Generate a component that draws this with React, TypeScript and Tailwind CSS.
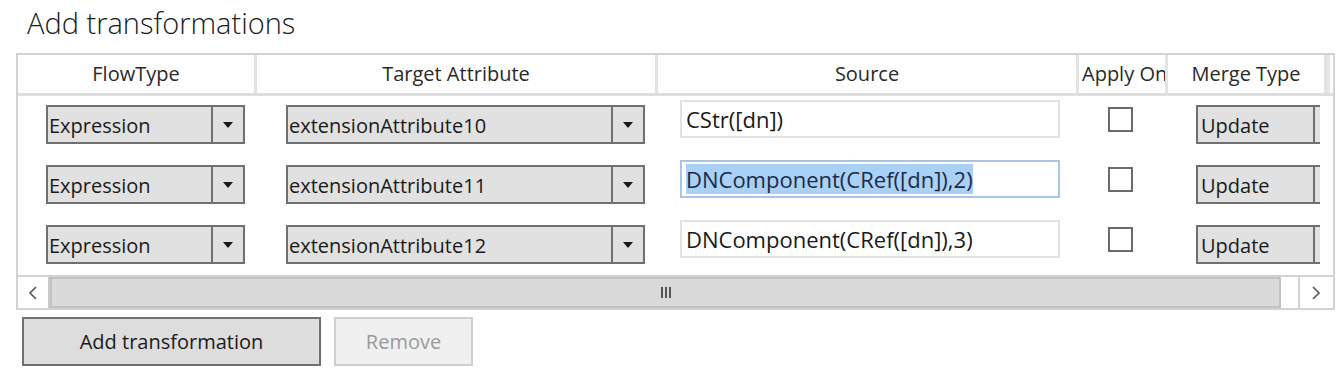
import React from 'react';

const font = { fontFamily: '"Open Sans", "Noto Sans", sans-serif' };

const rows = [
  { flow: 'Expression', target: 'extensionAttribute10', source: 'CStr([dn])', selected: false },
  { flow: 'Expression', target: 'extensionAttribute11', source: 'DNComponent(CRef([dn]),2)', selected: true },
  { flow: 'Expression', target: 'extensionAttribute12', source: 'DNComponent(CRef([dn]),3)', selected: false },
];

const Arrow: React.FC = () => (
  <svg width="10" height="6" viewBox="0 0 10 6">
    <path d="M0 0 L10 0 L5 6 Z" fill="#1a1a1a" />
  </svg>
);

// combobox look-alike, arrow part on the right
const Combo: React.FC<{ text: string; width: string; arrowLeft: string }> = ({ text, width, arrowLeft }) => (
  <div className={`flex h-[39px] ${width} border-2 border-[#707070] bg-[#e1e1e1]`}>
    <div className={`flex items-center ${arrowLeft} pl-[1px] pt-[2px] text-[20px] text-[#1a1a1a] overflow-hidden whitespace-nowrap`}>
      {text}
    </div>
    <div className="flex w-[32px] shrink-0 items-center justify-center border-l-2 border-[#707070]">
      <Arrow />
    </div>
  </div>
);

const App: React.FC = () => {
  return (
    <div className="w-[1344px] h-[376px] bg-white overflow-hidden" style={font}>
      <div className="pl-[27px] pt-[3px] h-[53px] text-[29px] font-light text-[#1a1a1a] leading-[40px]">
        Add transformations
      </div>

      <div className="ml-[16px] w-[1319px] border-2 border-[#d2d2d2]">
        {/* header */}
        <div className="flex h-[41px] border-b-[3px] border-[#dedede] text-[20px] text-[#2a2a2a]">
          <div className="flex w-[239px] items-center justify-center border-r-[3px] border-[#e3e3e3]">FlowType</div>
          <div className="flex w-[401px] items-center justify-center border-r-[3px] border-[#e3e3e3]">Target Attribute</div>
          <div className="flex w-[421px] items-center justify-center border-r-[3px] border-[#e3e3e3]">Source</div>
          <div className="flex w-[89px] items-center overflow-hidden whitespace-nowrap pl-[3px] border-r-[3px] border-[#e3e3e3]">Apply Once</div>
          <div className="flex w-[159px] items-center justify-center border-r-[3px] border-[#e3e3e3]">Merge Type</div>
          <div className="w-[3px] bg-[#e6e6e6]"></div>
        </div>

        {/* rows */}
        <div className="h-[179px]">
          {rows.map((r, i) => (
            <div key={i} className="flex h-[60px] items-start">
              <div className="w-[239px] pl-[28px] pt-[9px]">
                <Combo text={r.flow} width="w-[199px]" arrowLeft="w-[163px]" />
              </div>
              <div className="w-[401px] pl-[29px] pt-[9px]">
                <Combo text={r.target} width="w-[359px]" arrowLeft="w-[323px]" />
              </div>
              <div className="w-[421px] pl-[22px] pt-[4px]">
                <div
                  className={`flex h-[38px] w-[380px] items-center overflow-hidden border-2 px-[4px] text-[22px] whitespace-nowrap ${
                    r.selected ? 'border-[#a8c6e4] text-[#1b2a4a]' : 'border-[#e2e2e2] text-[#1a1a1a]'
                  }`}
                >
                  <span className={r.selected ? 'bg-[#a9d1f5] leading-[30px]' : 'leading-[30px]'}>{r.source}</span>
                </div>
              </div>
              <div className="w-[89px] pl-[29px] pt-[11px]">
                <div className="h-[25px] w-[25px] border-2 border-[#6b6b6b] bg-white"></div>
              </div>
              <div className="w-[152px] pl-[28px] pt-[9px] overflow-hidden">
                <div className="flex h-[39px] w-[150px] border-2 border-[#707070] bg-[#e1e1e1]">
                  <div className="flex w-[115px] shrink-0 items-center pl-[3px] pt-[2px] text-[20px] text-[#1a1a1a]">Update</div>
                  <div className="w-[32px] shrink-0 border-l-2 border-[#707070]"></div>
                </div>
              </div>
            </div>
          ))}
        </div>

        {/* horizontal scrollbar */}
        <div className="flex h-[33px] border-t-2 border-[#d2d2d2]">
          <div className="flex w-[32px] items-center justify-center bg-white text-[#555] border-r-2 border-[#c9c9c9]">
            <svg width="10" height="14" viewBox="0 0 10 14">
              <path d="M8 1 L2 7 L8 13" fill="none" stroke="#555" strokeWidth="1.6" />
            </svg>
          </div>
          <div className="flex w-[1231px] items-center justify-center bg-[#dadada] border-2 border-[#c2c2c2]">
            <div className="flex gap-[2px]">
              <div className="h-[11px] w-[2px] bg-[#555]"></div>
              <div className="h-[11px] w-[2px] bg-[#555]"></div>
              <div className="h-[11px] w-[2px] bg-[#555]"></div>
            </div>
          </div>
          <div className="w-[17px] bg-white"></div>
          <div className="flex w-[33px] items-center justify-center bg-white border-l-2 border-[#d2d2d2]">
            <svg width="10" height="14" viewBox="0 0 10 14">
              <path d="M2 1 L8 7 L2 13" fill="none" stroke="#555" strokeWidth="1.6" />
            </svg>
          </div>
        </div>
      </div>

      {/* buttons */}
      <div className="flex gap-[13px] pl-[22px] pt-[7px]">
        <button className="h-[49px] w-[299px] border-2 border-[#707070] bg-[#dddddd] text-[20px] text-[#1a1a1a]">
          Add transformation
        </button>
        <button className="h-[49px] w-[139px] border-2 border-[#cfcfcf] bg-[#f0f0f0] text-[20px] text-[#9a9a9a]">
          Remove
        </button>
      </div>
    </div>
  );
};

export default App;
